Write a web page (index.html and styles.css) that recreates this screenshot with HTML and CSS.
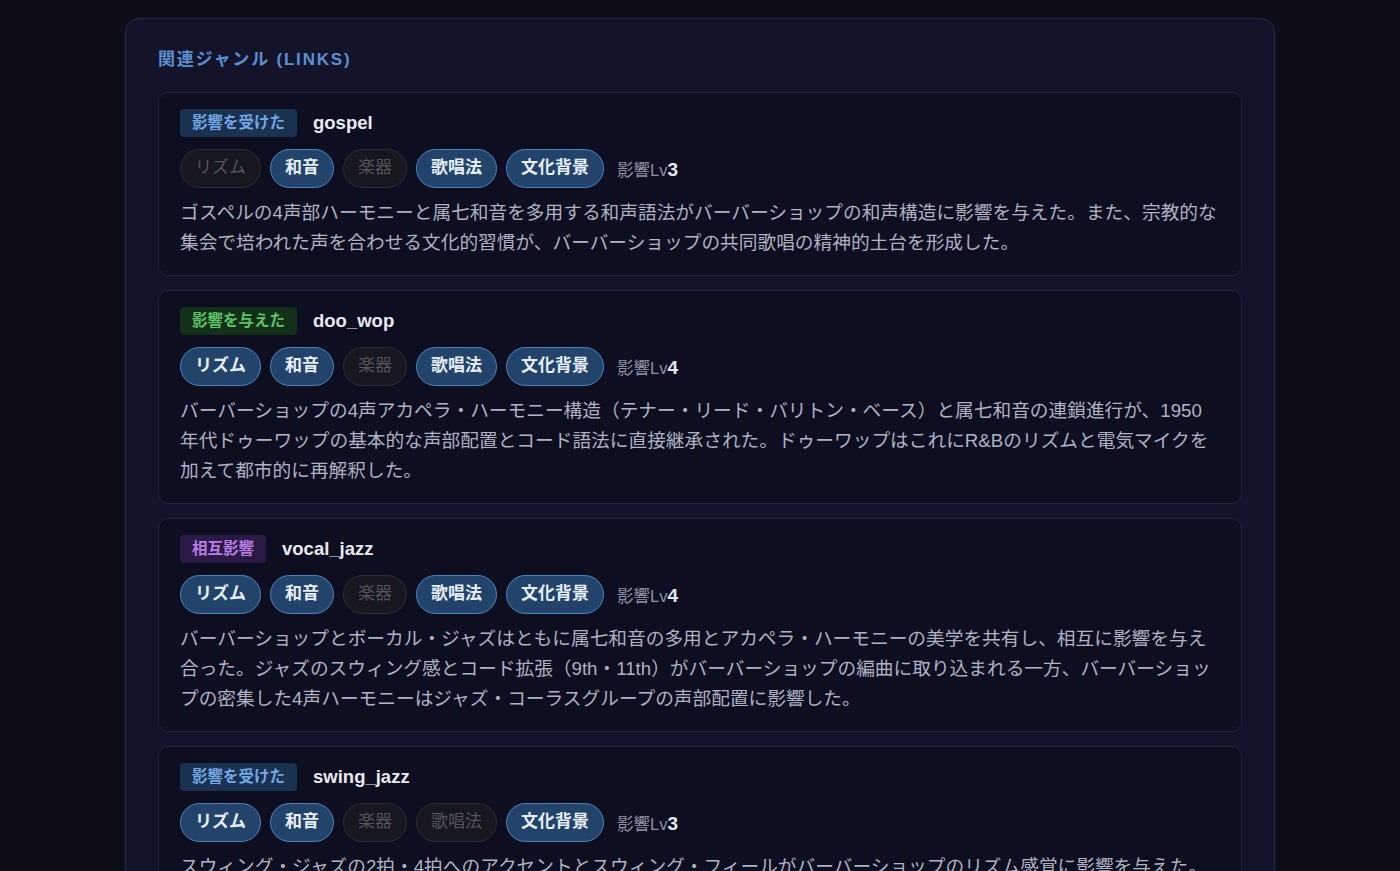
FILE: index.html
```html
<!DOCTYPE html>
<html lang="ja">
<head>
    <meta charset="UTF-8">
    <meta name="viewport" content="width=device-width, initial-scale=1.0">
    <title>関連ジャンル</title>
    <link rel="stylesheet" href="styles.css">
</head>
<body>
    <div id="page">
        <div class="panel">
            <h2 class="panel-title">関連ジャンル (LINKS)</h2>

            <div class="link-card">
                <div class="link-head">
                    <span class="dir dir-in">影響を受けた</span>
                    <span class="genre">gospel</span>
                </div>
                <div class="tags">
                    <span class="tag off">リズム</span>
                    <span class="tag on">和音</span>
                    <span class="tag off">楽器</span>
                    <span class="tag on">歌唱法</span>
                    <span class="tag on">文化背景</span>
                    <span class="level">影響Lv<b>3</b></span>
                </div>
                <p class="desc">ゴスペルの4声部ハーモニーと属七和音を多用する和声語法がバーバーショップの和声構造に影響を与えた。また、宗教的な集会で培われた声を合わせる文化的習慣が、バーバーショップの共同歌唱の精神的土台を形成した。</p>
            </div>

            <div class="link-card">
                <div class="link-head">
                    <span class="dir dir-out">影響を与えた</span>
                    <span class="genre">doo_wop</span>
                </div>
                <div class="tags">
                    <span class="tag on">リズム</span>
                    <span class="tag on">和音</span>
                    <span class="tag off">楽器</span>
                    <span class="tag on">歌唱法</span>
                    <span class="tag on">文化背景</span>
                    <span class="level">影響Lv<b>4</b></span>
                </div>
                <p class="desc">バーバーショップの4声アカペラ・ハーモニー構造（テナー・リード・バリトン・ベース）と属七和音の連鎖進行が、1950年代ドゥーワップの基本的な声部配置とコード語法に直接継承された。ドゥーワップはこれにR&amp;Bのリズムと電気マイクを加えて都市的に再解釈した。</p>
            </div>

            <div class="link-card">
                <div class="link-head">
                    <span class="dir dir-mutual">相互影響</span>
                    <span class="genre">vocal_jazz</span>
                </div>
                <div class="tags">
                    <span class="tag on">リズム</span>
                    <span class="tag on">和音</span>
                    <span class="tag off">楽器</span>
                    <span class="tag on">歌唱法</span>
                    <span class="tag on">文化背景</span>
                    <span class="level">影響Lv<b>4</b></span>
                </div>
                <p class="desc">バーバーショップとボーカル・ジャズはともに属七和音の多用とアカペラ・ハーモニーの美学を共有し、相互に影響を与え合った。ジャズのスウィング感とコード拡張（9th・11th）がバーバーショップの編曲に取り込まれる一方、バーバーショップの密集した4声ハーモニーはジャズ・コーラスグループの声部配置に影響した。</p>
            </div>

            <div class="link-card">
                <div class="link-head">
                    <span class="dir dir-in">影響を受けた</span>
                    <span class="genre">swing_jazz</span>
                </div>
                <div class="tags">
                    <span class="tag on">リズム</span>
                    <span class="tag on">和音</span>
                    <span class="tag off">楽器</span>
                    <span class="tag off">歌唱法</span>
                    <span class="tag on">文化背景</span>
                    <span class="level">影響Lv<b>3</b></span>
                </div>
                <p class="desc">スウィング・ジャズの2拍・4拍へのアクセントとスウィング・フィールがバーバーショップのリズム感覚に影響を与えた。ビッグバンド時代の流行曲がバーバーショップのレパートリーとして多く取り入れられた。</p>
            </div>
        </div>
    </div>
</body>
</html>
```

FILE: styles.css
```css
body {
    margin: 0;
    padding: 0;
    background-color: #0e0e18;
    color: #b0b4c4;
    font-family: "Liberation Sans", "Noto Sans CJK JP", sans-serif;
}
#page {
    padding: 18px 0 40px;
}
.panel {
    width: 1150px;
    box-sizing: border-box;
    margin: 0 auto;
    padding: 30px 32px 32px;
    background-color: #13142a;
    border: 1px solid #25274a;
    border-radius: 14px;
}
.panel-title {
    margin: 0 0 21px;
    font-size: 17px;
    font-weight: bold;
    letter-spacing: 1.8px;
    color: #5b8fd2;
    line-height: 22px;
}
.link-card {
    background-color: #0d0e1f;
    border: 1px solid #23253f;
    border-radius: 10px;
    padding: 16px 21px 17px;
    margin-bottom: 14px;
}
.link-head {
    display: flex;
    align-items: center;
    gap: 16px;
    height: 28px;
}
.dir {
    display: inline-block;
    height: 28px;
    line-height: 28px;
    padding: 0 12px;
    border-radius: 4px;
    font-size: 15.5px;
    font-weight: bold;
}
.dir-in {
    background-color: #1b3150;
    color: #72a8e4;
}
.dir-out {
    background-color: #12301a;
    color: #5cc462;
}
.dir-mutual {
    background-color: #2a1a45;
    color: #b97ee4;
}
.genre {
    font-size: 18.5px;
    font-weight: bold;
    color: #e8e9f0;
}
.tags {
    display: flex;
    align-items: center;
    gap: 9px;
    margin-top: 12px;
}
.tag {
    display: inline-block;
    box-sizing: border-box;
    height: 39px;
    line-height: 36px;
    padding: 0 14px;
    border-radius: 20px;
    font-size: 17px;
}
.tag.on {
    background-color: #22436a;
    border: 1.5px solid #4d84c0;
    color: #e6eef8;
    font-weight: bold;
}
.tag.off {
    background-color: #17171f;
    border: 1.5px solid #2d2e38;
    color: #53545e;
}
.level {
    margin-left: 4px;
    font-size: 16.5px;
    color: #8d91a2;
}
.level b {
    font-size: 19px;
    color: #e4e7f2;
}
.desc {
    margin: 10px 0 0;
    font-size: 18.7px;
    line-height: 30px;
    color: #aeb2c2;
}
```
